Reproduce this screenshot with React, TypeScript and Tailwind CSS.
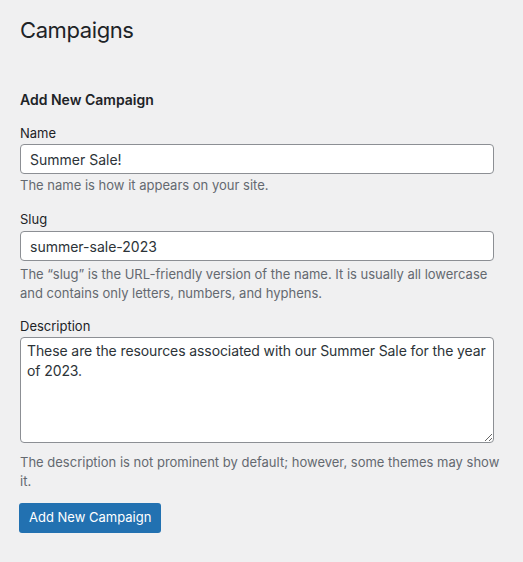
import React from "react";

const font = { fontFamily: 'Inter, "Liberation Sans", sans-serif' };

export default function App() {
  return (
    <div className="min-h-[562px] w-full bg-[#f0f0f1] text-[#1d2327] px-5" style={font}>
      <h1 className="pt-[15px] text-[22px] leading-[30px] font-normal tracking-[-0.4px]">Campaigns</h1>
      <h2 className="mt-[45px] text-[14px] leading-[20px] font-semibold">Add New Campaign</h2>

      <div className="mt-[13px]">
        <label className="block text-[13px] leading-[20px]">Name</label>
        <input
          readOnly
          value="Summer Sale!"
          className="mt-[1px] block w-[474px] h-[30px] rounded-[4px] border border-[#8c8f94] bg-white px-[9px] text-[14px] text-[#2c3338] outline-none"
          style={font}
        />
        <p className="mt-[1.5px] text-[13px] leading-[19px] text-[#646970]">The name is how it appears on your site.</p>
      </div>

      <div className="mt-[14.5px]">
        <label className="block text-[13px] leading-[20px]">Slug</label>
        <input
          readOnly
          value="summer-sale-2023"
          className="mt-[2px] block w-[474px] h-[30px] rounded-[4px] border border-[#8c8f94] bg-white px-[9px] text-[14px] text-[#2c3338] outline-none"
          style={font}
        />
        <p className="mt-[3.5px] text-[13px] leading-[19px] text-[#646970]">
          The “slug” is the URL-friendly version of the name. It is usually all lowercase and contains only letters, numbers, and hyphens.
        </p>
      </div>

      <div className="mt-[13.5px]">
        <label className="block text-[13px] leading-[20px]">Description</label>
        <textarea
          readOnly
          value="These are the resources associated with our Summer Sale for the year of 2023."
          className="mt-[1px] block w-[474px] h-[106px] rounded-[4px] border border-[#8c8f94] bg-white pl-[6px] pr-[2px] pt-[3px] text-[14px] leading-[20px] tracking-[-0.1px] text-[#2c3338] outline-none resize-y"
          style={font}
        />
        <p className="mt-[9.5px] text-[13px] leading-[19px] text-[#646970]">
          The description is not prominent by default; however, some themes may show it.
        </p>
      </div>

      <button
        className="-ml-px mt-[12.5px] h-[30px] rounded-[3px] bg-[#2271b1] px-[10px] text-[13px] text-white"
        style={font}
      >
        Add New Campaign
      </button>
    </div>
  );
}
